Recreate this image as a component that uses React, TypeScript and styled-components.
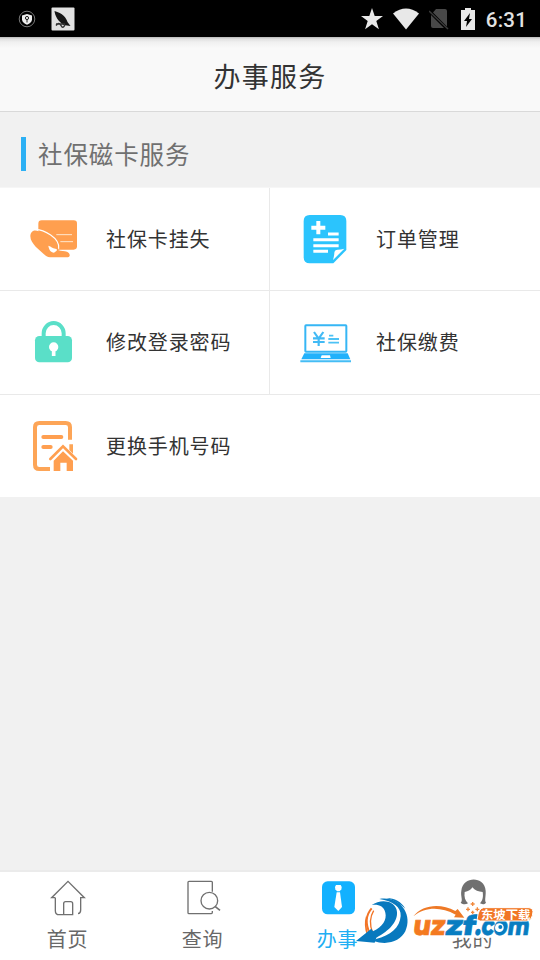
import React from "react";
import styled, { createGlobalStyle } from "styled-components";

const GlobalStyle = createGlobalStyle`
  * { box-sizing: border-box; }
  html, body { margin: 0; padding: 0; background: #f1f1f1; }
  body { font-family: "Noto Sans CJK SC", "Noto Sans", sans-serif; }
`;

const Screen = styled.div`
  position: relative;
  display: flex;
  flex-direction: column;
  width: 540px;
  height: 960px;
  overflow: hidden;
  background: #f1f1f1;
`;

const StatusBar = styled.header`
  display: flex;
  align-items: center;
  justify-content: space-between;
  flex: none;
  height: 37px;
  padding: 0 13px 0 16px;
  background: #000;
`;

const StatusGroup = styled.div<{ $gap: number }>`
  display: flex;
  align-items: center;
  gap: ${(p) => p.$gap}px;
`;

const Clock = styled.span`
  padding-top: 3px;
  color: #e2e2e2;
  font: 500 20.5px/24px Roboto, sans-serif;
  letter-spacing: 0.2px;
`;

const TitleBar = styled.div`
  display: flex;
  align-items: center;
  justify-content: center;
  flex: none;
  height: 75px;
  padding-top: 3px;
  border-bottom: 1px solid #d9d9d9;
  background: linear-gradient(#b9b9b9 0, #dfdfdf 2px, #f0f0f0 5px, #f9f9f9 11px);
`;

const Title = styled.h1`
  margin: 0;
  color: #333;
  font-size: 27px;
  font-weight: 400;
  line-height: 40px;
  letter-spacing: 1.2px;
`;

const SectionHeader = styled.div`
  display: flex;
  align-items: center;
  flex: none;
  gap: 12px;
  height: 75px;
  padding: 8px 0 0 21px;
`;

const Accent = styled.span`
  width: 5px;
  height: 34px;
  background: #2cb0f4;
`;

const SectionTitle = styled.h2`
  margin: 0;
  color: #707070;
  font-size: 24.5px;
  font-weight: 400;
  line-height: 34px;
  letter-spacing: 0.9px;
`;

const ServiceGrid = styled.main`
  display: grid;
  grid-template-columns: 268.5px 270px;
  grid-template-rows: 102px 102.5px 102.5px;
  column-gap: 1.5px;
  row-gap: 1px;
  flex: none;
  height: 310px;
  background: #e9e9e9;
  border-top: 1px solid #f6f6f6;
`;

const ServiceCell = styled.div<{ $wide?: boolean }>`
  display: flex;
  align-items: center;
  grid-column: ${(p) => (p.$wide ? "1 / -1" : "auto")};
  background: #fff;
`;

const ServiceIcon = styled.svg`
  flex: none;
  width: 106px;
  height: 102px;
`;

const ServiceLabel = styled.span`
  color: #333;
  font-size: 20px;
  line-height: 30px;
  letter-spacing: 0.9px;
`;

const TabBar = styled.nav`
  display: grid;
  grid-template-columns: repeat(4, 135px);
  flex: none;
  height: 90px;
  margin-top: auto;
  border-top: 2px solid #ebebeb;
  background: #fff;
`;

const Tab = styled.div<{ $active?: boolean }>`
  display: flex;
  flex-direction: column;
  align-items: center;
  color: ${(p) => (p.$active ? "#20aef3" : "#686868")};
`;

const TabIcon = styled.svg`
  width: 60px;
  height: 50px;
`;

const TabLabel = styled.span`
  margin-top: 2px;
  font-size: 20px;
  line-height: 30px;
  letter-spacing: 0.8px;
`;

const Watermark = styled.svg`
  position: absolute;
  right: 0;
  bottom: 0;
  width: 190px;
  height: 90px;
`;

const ORANGE = "#ff9f4f";

const CardIcon = () => (
  <ServiceIcon viewBox="0 5 318 306">
    <rect x="115" y="102" width="116" height="88" rx="10" fill={ORANGE} />
    <path
      d="M91 150c0-13 9-19 20-17l24 8c17 6 30 16 38 29 5 8 4 14 1 21 11 4 19 3 27 5 6 2 9 9 8 12-1 4-4 5-9 5h-50c-8 0-13-5-19-10l-24-22c-8-9-16-19-16-31z"
      fill={ORANGE}
    />
    <path
      d="M108 130c13 0 30 7 44 16 13 9 26 22 24 40"
      fill="none"
      stroke="#fff"
      strokeWidth="3.5"
      strokeLinecap="round"
    />
    <path d="M145 178c9 2 12 8 21 9 5 1 7 4 3 7l-7 5c-10-1-15-9-17-21z" fill="#fff" />
    <path d="M169 145h47M181 166h38" stroke="#ffe6ce" strokeWidth="3" />
  </ServiceIcon>
);

const OrderIcon = () => (
  <ServiceIcon viewBox="0 5 318 306">
    <path
      d="M119 86h92q18 0 18 18v87l-39 40h-71q-18 0-18-18V104q0-18 18-18z"
      fill="#2bc4fd"
    />
    <path d="M189 221q4-14 4-22 1-9 10-9 10 0 20-3z" fill="#fff" />
    <path d="M145 104v40M124 124h42" stroke="#fff" strokeWidth="12" />
    <path
      d="M174 143h32M130 160h76M130 178h76M130 195h44"
      stroke="#fff"
      strokeWidth="9"
    />
  </ServiceIcon>
);

const LockIcon = () => (
  <ServiceIcon viewBox="0 2 318 306">
    <path
      d="M131 142v-13a30 31 0 0 1 60 0v13"
      fill="none"
      stroke="#5adfc8"
      strokeWidth="12"
    />
    <rect x="105" y="137" width="111" height="79" rx="13" fill="#5adfc8" />
    <circle cx="161" cy="170" r="14" fill="#fff" />
    <path d="M161 170v27" stroke="#fff" strokeWidth="11" />
  </ServiceIcon>
);

const LaptopIcon = () => (
  <ServiceIcon viewBox="0 2 318 306">
    <rect
      x="106"
      y="105"
      width="123"
      height="79"
      rx="2"
      fill="#fff"
      stroke="#36b6f5"
      strokeWidth="6"
    />
    <path
      d="M132 125l14 20 14-20M146 146v21M129 144h35M129 155h35"
      fill="none"
      stroke="#42baf5"
      strokeWidth="6.500"
    />
    <path d="M177 136h13M175 146h32M175 157h32" stroke="#4dc2f5" strokeWidth="5.500" />
    <path d="M103 189h130l8 18H94z" fill="#21b1fb" />
    <path d="M155 195h25l2 8h-30z" fill="#fff" />
    <path d="M91 213h152" stroke="#45bdf5" strokeWidth="6" />
  </ServiceIcon>
);

const PhoneIcon = () => (
  <ServiceIcon viewBox="0 12 318 306">
    <path
      d="M210 146v-37q0-13-13-13h-79q-13 0-13 13v112q0 13 13 13h32"
      fill="none"
      stroke="#fda557"
      strokeWidth="12"
    />
    <path
      d="M130 138h54M130 168h22"
      stroke="#ff9f50"
      strokeWidth="12"
      strokeLinecap="round"
    />
    <path
      d="M151 204l38-38 39 38"
      fill="none"
      stroke="#ff9f50"
      strokeWidth="8"
      strokeLinecap="round"
    />
    <path d="M208 160h11v28l-11-11z" fill="#fda557" />
    <path d="M161 209l28-28 30 28v31h-19v-25h-19v25h-20z" fill="#ff9f50" />
  </ServiceIcon>
);

const HomeIcon = () => (
  <TabIcon viewBox="114 21 180 150" fill="none" stroke="#707070" strokeWidth="4">
    <path d="M166 98h-11l49-49 49 49h-11v37q0 10-8 11M166 98v39q0 12 12 12h40V116q0-6-6-6h-15q-6 0-6 6v33" />
  </TabIcon>
);

const SearchIcon = () => (
  <TabIcon viewBox="519 21 180 150" fill="none" stroke="#707070" strokeWidth="4">
    <path d="M637 80V52q0-3-3-3h-67q-3 0-3 3v91q0 3 3 3h67q3 0 3-4v-4" />
    <circle cx="628" cy="107" r="25" />
    <path d="M646 125l14 11" strokeWidth="5" />
  </TabIcon>
);

const TieIcon = () => (
  <TabIcon viewBox="54 20 180 150">
    <rect x="96" y="48" width="99" height="99" rx="17" fill="#13b1ff" />
    <path d="M138 59h14q6 7 2 13l-5 6h-8l-5-6q-4-6 2-13z" fill="#fff" />
    <path d="M140 81h10l6 44-11 12-12-12z" fill="#fff" />
  </TabIcon>
);

const ProfileIcon = () => (
  <TabIcon viewBox="278 6 180 150">
    <path
      d="M331 98c8-8-1-19 2-36 5-45 70-44 73 0 1 18-4 28 1 36-5 6-13 5-18 2 9-10 10-21 8-34-12 0-24-5-31-14-4 8-12 12-23 14-2 15 1 25 10 34-7 4-15 4-22-2z"
      fill="#707070"
    />
  </TabIcon>
);

const BrandMark = () => (
  <Watermark viewBox="0 0 570 270">
    <path d="M296 160h244v43H296zM346 104h52v30h-52z" fill="#fff" />
    <g fill="none" stroke="#f27427">
      <path d="M50 140c-5 18-3 36 2 52" strokeWidth="5" />
      <path d="M65 115c-18 20-18 48-6 75" strokeWidth="6" />
      <path d="M71 122c-12 20-12 44-3 66" strokeWidth="4" />
    </g>
    <g fill="#0879be">
      <path d="M65 105C92 86 130 91 139 117c11 34-22 66-60 86l-5 15-56-5 46-37 5 8c29-14 42-35 37-56-4-20-22-26-41-23z" />
      <path d="M88 87c64-10 101 48 78 97-15 30-53 43-96 29l8-6c43-10 72-35 74-69 2-26-23-45-64-51z" />
      <path d="M110 84c23 0 45 12 56 32-17-17-35-25-56-32z" />
    </g>
    <path
      d="M190 139c28-36 82-40 126-16l7-6 20 26-31-1 5-8c-43-22-87-26-127 5z"
      fill="#ee7926"
    />
    <g
      fontFamily="Montserrat, Inter, sans-serif"
      fontWeight="800"
      fontSize="82"
      strokeWidth="2"
      transform="translate(27 0) skewX(-8)"
    >
      <text x="187" y="194" textLength="96" lengthAdjust="spacingAndGlyphs" fill="#f47a20" stroke="#f47a20">
        uz
      </text>
      <text x="284" y="194" textLength="90" lengthAdjust="spacingAndGlyphs" fill="#087dc1" stroke="#087dc1">
        zf
      </text>
      <text x="374" y="194" textLength="162" lengthAdjust="spacingAndGlyphs" fill="#087dc1" stroke="#087dc1">
        .com
      </text>
    </g>
    <circle cx="448" cy="173" r="13" fill="#fff" />
    <circle cx="451" cy="171" r="6" fill="#087dc1" />
    <path
      d="M400 113h137q12 0 12 12-2 27-19 28H391q-9 0-9-8 3-29 18-32z"
      fill="#f17625"
      stroke="#fff"
      strokeWidth="3"
    />
    <text
      x="393"
      y="146"
      fontFamily="'Noto Sans CJK SC', sans-serif"
      fontWeight="700"
      fontSize="35"
      textLength="148"
      lengthAdjust="spacingAndGlyphs"
      fill="#fff"
    >
      东坡下载
    </text>
    <path
      d="M368 96v12M362 102h12M354 112v12M348 118h12M382 112v12M376 118h12M368 122v10M363 127h10"
      stroke="#f1893d"
      strokeWidth="4"
    />
  </Watermark>
);

const services = [
  { label: "社保卡挂失", Icon: CardIcon },
  { label: "订单管理", Icon: OrderIcon },
  { label: "修改登录密码", Icon: LockIcon },
  { label: "社保缴费", Icon: LaptopIcon },
  { label: "更换手机号码", Icon: PhoneIcon, wide: true },
];

const tabs = [
  { label: "首页", Icon: HomeIcon },
  { label: "查询", Icon: SearchIcon },
  { label: "办事", Icon: TieIcon, active: true },
  { label: "我的", Icon: ProfileIcon },
];

export default function App() {
  return (
    <Screen>
      <GlobalStyle />
      <StatusBar>
        <StatusGroup $gap={13}>
          <svg width="22" height="22" viewBox="0 0 22 22">
            <circle cx="11" cy="11" r="7.800" fill="none" stroke="#777" />
            <path d="M11 6l5 1.600v4q-.400 3.500-5 5.200-4.600-1.700-5-5.200v-4z" fill="#eee" />
            <circle cx="11" cy="10" r="1.600" fill="none" stroke="#222" />
            <path d="M11 11.500v3" stroke="#222" />
          </svg>
          <svg width="24" height="24" viewBox="0 0 24 24">
            <rect x="0.500" y="0.500" width="23" height="23" rx="1" fill="#e2e2e2" />
            <path d="M3.500 4c8 2 12 7 13 11l3 4-7-1C7 14 4 9 3.500 4z" fill="#161616" />
            <path d="M5 17h9M5 18.500q3-4 5 0t4-1" fill="none" stroke="#333" strokeWidth="1.500" />
          </svg>
        </StatusGroup>
        <StatusGroup $gap={10}>
          <svg width="22" height="22" viewBox="0 0 22 22">
            <path d="M11 0l2.700 8H22l-6.700 5 2.600 8.200L11 16.300l-6.900 4.900L6.700 13 0 8h8.300z" fill="#e8e8e8" />
          </svg>
          <svg width="26" height="22" viewBox="0 0 26 22">
            <path d="M0 5.500Q13-4.500 26 5.500L13 21.500z" fill="#e8e8e8" />
          </svg>
          <svg width="20" height="22" viewBox="0 0 20 22">
            <path d="M7 1h9q2 0 2 2v15.500L4 4.500zM2 7l13 13H4q-2 0-2-2z" fill="#484848" />
            <path d="M0 3l19 18" stroke="#393939" strokeWidth="1.500" />
          </svg>
          <svg width="17" height="22" viewBox="-2 0 17 22">
            <path d="M4 0h6v2h4v20H0V2h4z" fill="#e8e8e8" />
            <path d="M9 5L3 13h3l-1 6 6-8H8z" fill="#000" />
          </svg>
          <Clock>6:31</Clock>
        </StatusGroup>
      </StatusBar>
      <TitleBar>
        <Title>办事服务</Title>
      </TitleBar>
      <SectionHeader>
        <Accent />
        <SectionTitle>社保磁卡服务</SectionTitle>
      </SectionHeader>
      <ServiceGrid>
        {services.map(({ label, Icon, wide }) => (
          <ServiceCell key={label} $wide={wide}>
            <Icon />
            <ServiceLabel>{label}</ServiceLabel>
          </ServiceCell>
        ))}
      </ServiceGrid>
      <TabBar>
        {tabs.map(({ label, Icon, active }) => (
          <Tab key={label} $active={active}>
            <Icon />
            <TabLabel>{label}</TabLabel>
          </Tab>
        ))}
      </TabBar>
      <BrandMark />
    </Screen>
  );
}
